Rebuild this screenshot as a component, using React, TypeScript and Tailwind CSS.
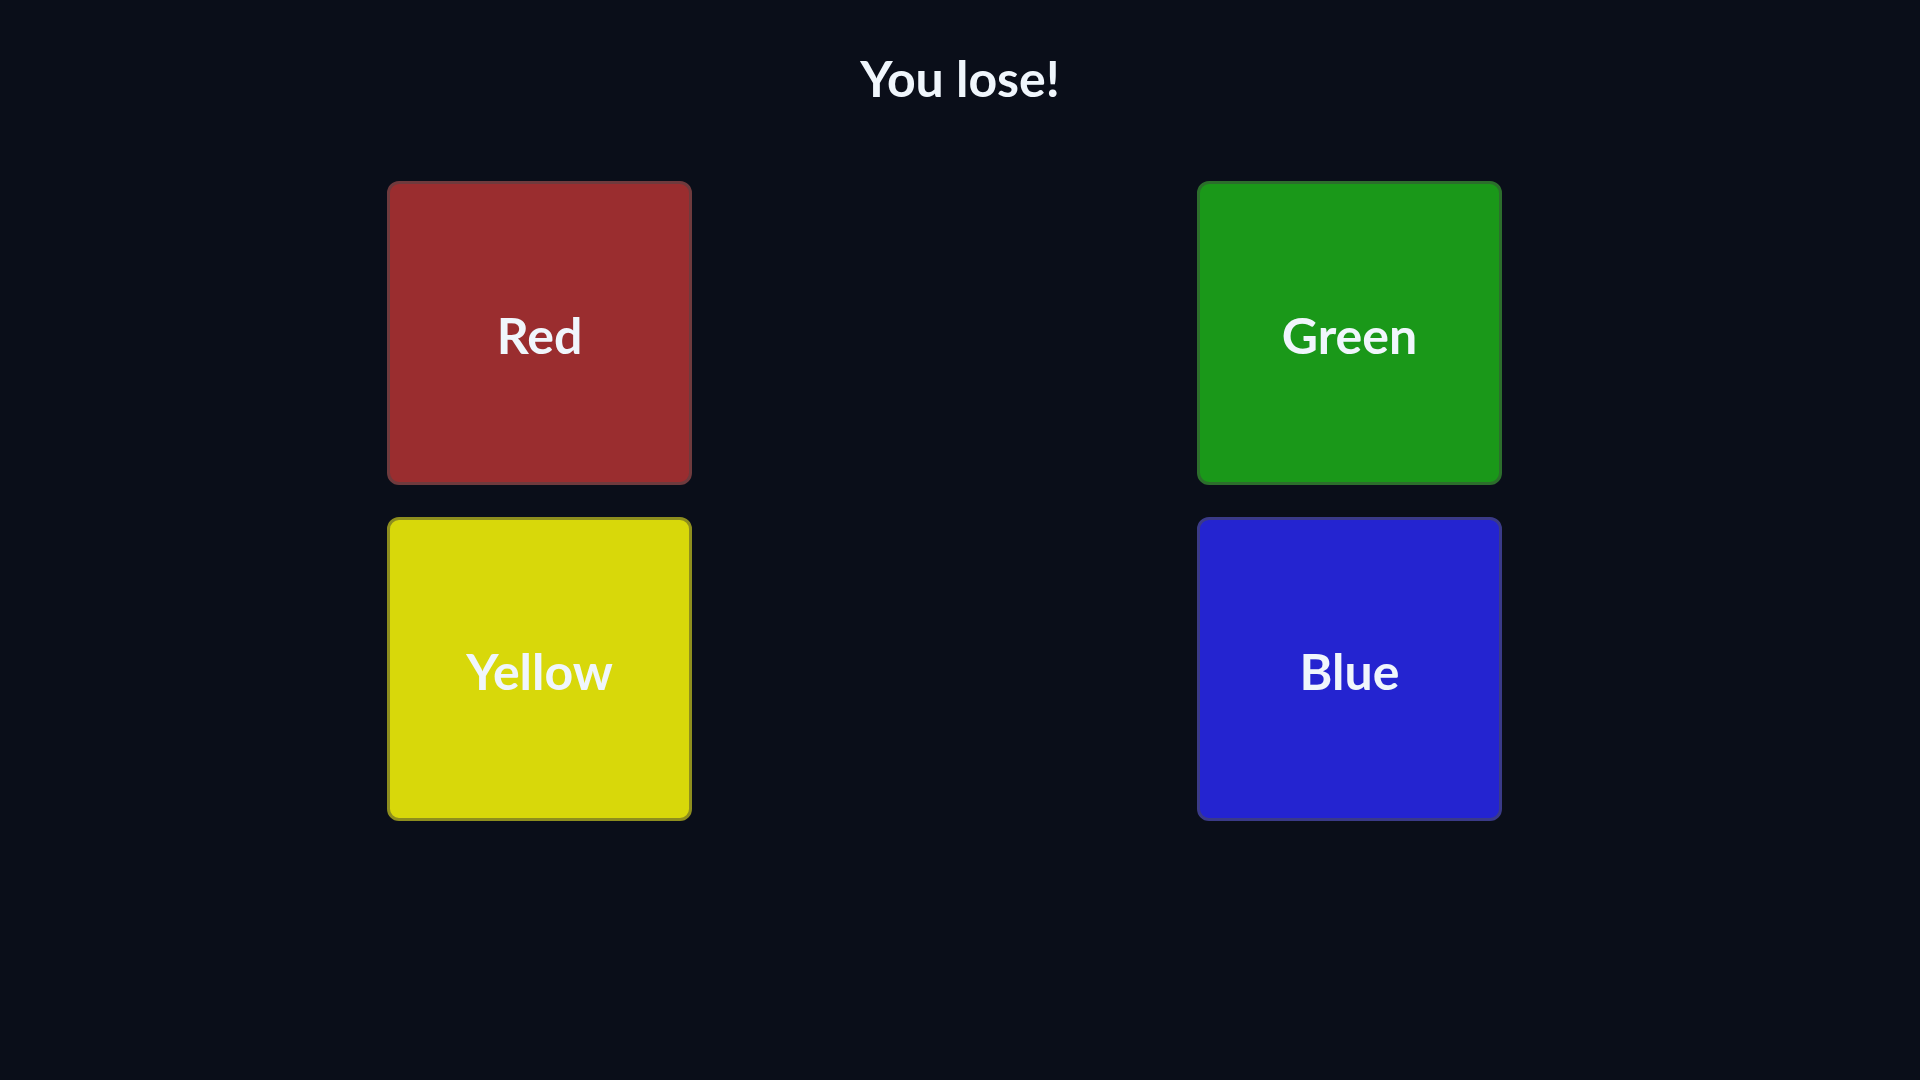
const tiles = [
  { name: 'Red', cls: 'bg-[#9a2d2f] border-[#6f3a3d]' },
  { name: 'Green', cls: 'bg-[#1a9819] border-[#2c6e2c]' },
  { name: 'Yellow', cls: 'bg-[#d8d80a] border-[#8e8e1e]' },
  { name: 'Blue', cls: 'bg-[#2424d0] border-[#3a3a88]' },
]

export default function App() {
  return (
    <div className="min-h-screen w-full bg-[#0a0e19] text-[#f0f6fc] font-['Lato',sans-serif]">
      <h1 className="pt-[53px] text-center text-[50px] leading-none font-bold">You lose!</h1>

      <div className="mt-[78px] pl-[387px] grid grid-cols-[305px_305px] gap-x-[505px] gap-y-[32px]">
        {tiles.map((t) => (
          <button
            key={t.name}
            className={`h-[304px] w-[305px] rounded-xl border-[3px] flex items-center justify-center pt-1 text-[50px] font-bold ${t.cls}`}
          >
            {t.name}
          </button>
        ))}
      </div>
    </div>
  )
}
